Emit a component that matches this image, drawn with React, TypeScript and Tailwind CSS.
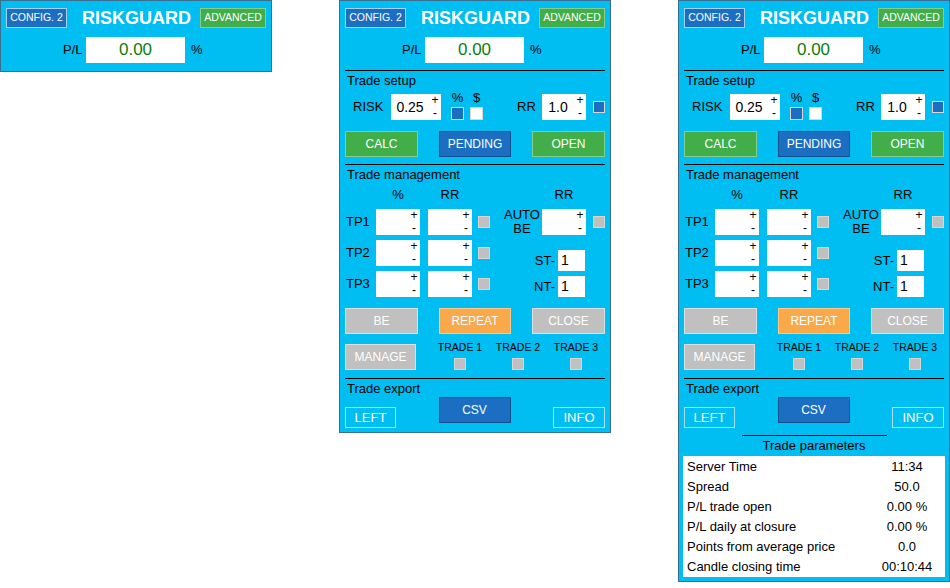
import React from "react";

type Tone = "blue" | "blueLight" | "green" | "gray" | "orange" | "outline";

const toneCls: Record<Tone, string> = {
  blue: "bg-[#1b6ec2] border-[#124f8f] text-white",
  blueLight: "bg-[#1b6ec2] border-[#a3d2f2] text-white",
  green: "bg-[#41ae4a] border-[#86cf8a] text-white",
  gray: "bg-[#c0c0c0] border-[#dedede] text-white",
  orange: "bg-[#f9a84a] border-[#fcc889] text-white",
  outline: "bg-transparent border-[#a6e3fa] text-white",
};

function Btn({ label, tone, className }: { label: string; tone: Tone; className: string }) {
  return (
    <div className={`flex items-center justify-center border ${toneCls[tone]} ${className}`}>
      {label}
    </div>
  );
}

function Check({ fill, className = "" }: { fill: "blue" | "white" | "gray"; className?: string }) {
  const bg = fill === "blue" ? "bg-[#1b6ec2]" : fill === "white" ? "bg-white" : "bg-[#c0c0c0]";
  return <div className={`shrink-0 border border-[#d6d6d6] ${bg} ${className}`} />;
}

function Spin({ value = "", className }: { value?: string; className: string }) {
  return (
    <div className={`flex h-[26px] shrink-0 bg-white ${className}`}>
      <div className="flex-1 text-center text-[14px] leading-[26px]">{value}</div>
      <div className="flex w-[12px] flex-col items-center text-[12px] leading-[13px]">
        <span>+</span>
        <span>-</span>
      </div>
    </div>
  );
}

function Separator() {
  return <div className="mx-[5px] mt-[7px] h-px bg-black" />;
}

function SectionTitle({ text }: { text: string }) {
  return <div className="mt-[2px] pl-[7px] text-[13px] leading-[15px]">{text}</div>;
}

function Header() {
  return (
    <>
      <div className="flex items-center px-[5px] pt-[7px]">
        <Btn label="CONFIG. 2" tone="blueLight" className="h-[20px] w-[61px] text-[10.5px]" />
        <div className="flex-1 pl-[6px] text-center text-[18px] font-bold leading-[20px] text-white">
          RISKGUARD
        </div>
        <Btn label="ADVANCED" tone="green" className="h-[20px] w-[66px] text-[10.5px]" />
      </div>
      <div className="mt-[9px] flex items-center pl-[62px]">
        <span className="w-[23px] text-[13px]">P/L</span>
        <div className="h-[26px] w-[99px] bg-white text-center text-[17px] leading-[26px] text-[#0b7d0b]">
          0.00
        </div>
        <span className="ml-[6px] text-[13px]">%</span>
      </div>
    </>
  );
}

function TradeSetup() {
  return (
    <>
      <Separator />
      <SectionTitle text="Trade setup" />
      <div className="mt-[6px] flex h-[26px] items-center pl-[13px] text-[13px]">
        <span className="w-[38px]">RISK</span>
        <Spin value="0.25" className="w-[50px]" />
        <div className="-mt-[2px] ml-[9px] flex gap-[6px] self-start pl-[1px]">
          <div className="flex flex-col items-center">
            <span className="leading-[12px]">%</span>
            <Check fill="blue" className="mt-[3px] h-[13px] w-[13px]" />
          </div>
          <div className="flex flex-col items-center">
            <span className="leading-[12px]">$</span>
            <Check fill="white" className="mt-[3px] h-[13px] w-[13px]" />
          </div>
        </div>
        <span className="ml-[34px] w-[25px]">RR</span>
        <Spin value="1.0" className="w-[44px]" />
        <Check fill="blue" className="ml-[7px] h-[12px] w-[12px]" />
      </div>
      <div className="mt-[11px] flex justify-between px-[5px] text-[12px]">
        <Btn label="CALC" tone="green" className="h-[26px] w-[73px]" />
        <Btn label="PENDING" tone="blue" className="h-[26px] w-[72px]" />
        <Btn label="OPEN" tone="green" className="h-[26px] w-[73px]" />
      </div>
    </>
  );
}

function TradeManagement() {
  return (
    <>
      <Separator />
      <SectionTitle text="Trade management" />
      <div className="mt-[5px] flex text-[13px]">
        <div className="pl-[6px]">
          <div className="flex h-[15px] leading-[15px]">
            <span className="w-[30px]" />
            <span className="w-[44px] text-center">%</span>
            <span className="ml-[8px] w-[44px] text-center">RR</span>
          </div>
          <div className="mt-[7px] flex flex-col gap-[5px]">
            {["TP1", "TP2", "TP3"].map((tp) => (
              <div key={tp} className="flex h-[26px] items-center">
                <span className="w-[30px]">{tp}</span>
                <Spin className="w-[44px]" />
                <Spin className="ml-[8px] w-[44px]" />
                <Check fill="gray" className="ml-[6px] h-[12px] w-[12px]" />
              </div>
            ))}
          </div>
        </div>
        <div className="ml-[12px]">
          <div className="flex h-[15px] leading-[15px]">
            <span className="w-[40px]" />
            <span className="w-[44px] text-center">RR</span>
          </div>
          <div className="mt-[7px] flex h-[26px] items-center">
            <div className="w-[40px] text-center leading-[14px]">
              AUTO
              <br />
              BE
            </div>
            <Spin className="w-[44px]" />
            <Check fill="gray" className="ml-[7px] h-[12px] w-[12px]" />
          </div>
          {["ST-", "NT-"].map((l, i) => (
            <div key={l} className={`flex h-[21px] items-center ${i === 0 ? "mt-[15px]" : "mt-[5px]"}`}>
              <span className="ml-[30px] w-[26px] pr-[3px] text-right">{l}</span>
              <div className="h-[21px] w-[27px] bg-white pl-[3px] text-[14px] leading-[21px]">1</div>
            </div>
          ))}
        </div>
      </div>
      <div className="mt-[11px] flex justify-between px-[5px] text-[12px]">
        <Btn label="BE" tone="gray" className="h-[26px] w-[73px]" />
        <Btn label="REPEAT" tone="orange" className="h-[26px] w-[72px]" />
        <Btn label="CLOSE" tone="gray" className="h-[26px] w-[73px]" />
      </div>
      <div className="mt-[7px] flex items-end px-[5px]">
        <Btn label="MANAGE" tone="gray" className="h-[26px] w-[73px] text-[12px]" />
        <div className="ml-[15px] flex">
          {["TRADE 1", "TRADE 2", "TRADE 3"].map((t) => (
            <div key={t} className="flex w-[58px] flex-col items-center gap-[4px]">
              <span className="text-[10.5px] leading-[13px]">{t}</span>
              <Check fill="gray" className="h-[12px] w-[12px]" />
            </div>
          ))}
        </div>
      </div>
    </>
  );
}

function TradeExport() {
  return (
    <>
      <div className="mx-[5px] mt-[8px] h-px bg-black" />
      <SectionTitle text="Trade export" />
      <div className="mt-[1px] flex items-start justify-between px-[5px] text-[12px]">
        <Btn label="LEFT" tone="outline" className="mt-[10px] h-[21px] w-[51px] text-[13px]" />
        <Btn label="CSV" tone="blue" className="h-[26px] w-[72px]" />
        <Btn label="INFO" tone="outline" className="mt-[10px] h-[21px] w-[52px] text-[13px]" />
      </div>
    </>
  );
}

const params: [string, string][] = [
  ["Server Time", "11:34"],
  ["Spread", "50.0"],
  ["P/L trade open", "0.00 %"],
  ["P/L daily at closure", "0.00 %"],
  ["Points from average price", "0.0"],
  ["Candle closing time", "00:10:44"],
];

function TradeParameters() {
  return (
    <>
      <div className="mx-auto mt-[7px] h-px w-[145px] bg-black" />
      <div className="mt-[2px] text-center text-[13px] leading-[15px]">Trade parameters</div>
      <div className="mx-[4px] mt-[3px] bg-white pt-[1px] text-[13px] leading-[20px]">
        {params.map(([k, v]) => (
          <div key={k} className="flex justify-between">
            <span className="pl-[4px]">{k}</span>
            <span className="w-[76px] text-center">{v}</span>
          </div>
        ))}
      </div>
    </>
  );
}

function Panel({ mode }: { mode: "mini" | "mid" | "full" }) {
  return (
    <div
      className={`w-[272px] shrink-0 border border-[#3a6f8f] bg-[#00bdf2] text-black ${
        mode === "mini" ? "pb-[8px]" : "pb-[4px]"
      }`}
    >
      <Header />
      {mode !== "mini" && (
        <>
          <TradeSetup />
          <TradeManagement />
          <TradeExport />
        </>
      )}
      {mode === "full" && <TradeParameters />}
    </div>
  );
}

export default function App() {
  return (
    <div className="flex items-start gap-[67px] font-['Liberation_Sans',Arial,sans-serif]">
      <Panel mode="mini" />
      <Panel mode="mid" />
      <Panel mode="full" />
    </div>
  );
}
